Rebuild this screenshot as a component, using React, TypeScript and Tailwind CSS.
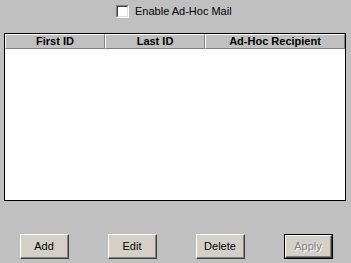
import React from "react";

const font = { fontFamily: '"Liberation Sans", Arial, sans-serif' };

function Btn({ label, disabled }: { label: string; disabled?: boolean }) {
  const inner = (
    <div className="w-full h-full bg-[#d4d0c8] border-t border-l border-t-white border-l-white border-r border-b border-r-[#404040] border-b-[#404040] flex">
      <div className="flex-1 border-r border-b border-r-[#808080] border-b-[#808080] flex items-center justify-center">
        <span
          className={
            disabled
              ? "text-[11px] text-[#808080] [text-shadow:1px_1px_0_#ffffff]"
              : "text-[11px] text-black"
          }
        >
          {label}
        </span>
      </div>
    </div>
  );
  return (
    <div className={disabled ? "w-[49px] h-[25px] border border-black" : "w-[49px] h-[25px]"}>
      {inner}
    </div>
  );
}

function HeadCell({ label, w, last }: { label: string; w: string; last?: boolean }) {
  return (
    <div
      className={
        (last ? "flex-1 " : w + " ") +
        "h-[15px] bg-[#c0c0c0] border-t border-l border-t-white border-l-white border-r border-b border-r-[#808080] border-b-[#808080] flex items-center justify-center"
      }
    >
      <span className="text-[11px] font-bold text-black leading-none">{label}</span>
    </div>
  );
}

export default function App() {
  return (
    <div className="w-[351px] h-[263px] bg-[#c0c0c0] relative overflow-hidden" style={font}>
      <div className="flex items-center pl-[116px] pt-[5px] h-[18px]">
        <div className="w-[13px] h-[13px] border-t border-l border-t-[#808080] border-l-[#808080] border-r border-b border-r-white border-b-white">
          <div className="w-full h-full bg-white border-t border-l border-t-[#404040] border-l-[#404040] border-r border-b border-r-[#dfdfdf] border-b-[#dfdfdf]" />
        </div>
        <span className="ml-[6px] text-[11px] text-black leading-none">Enable Ad-Hoc Mail</span>
      </div>
      <div className="mx-[4px] mt-[15px] w-[342px] h-[168px] border border-black bg-white flex flex-col">
        <div className="flex">
          <HeadCell label="First ID" w="w-[100px]" />
          <HeadCell label="Last ID" w="w-[100px]" />
          <HeadCell label="Ad-Hoc Recipient" w="" last />
        </div>
        <div className="flex-1 bg-white" />
      </div>
      <div className="flex pl-[20px] gap-[39px] mt-[33px]">
        <Btn label="Add" />
        <Btn label="Edit" />
        <Btn label="Delete" />
        <Btn label="Apply" disabled />
      </div>
    </div>
  );
}
